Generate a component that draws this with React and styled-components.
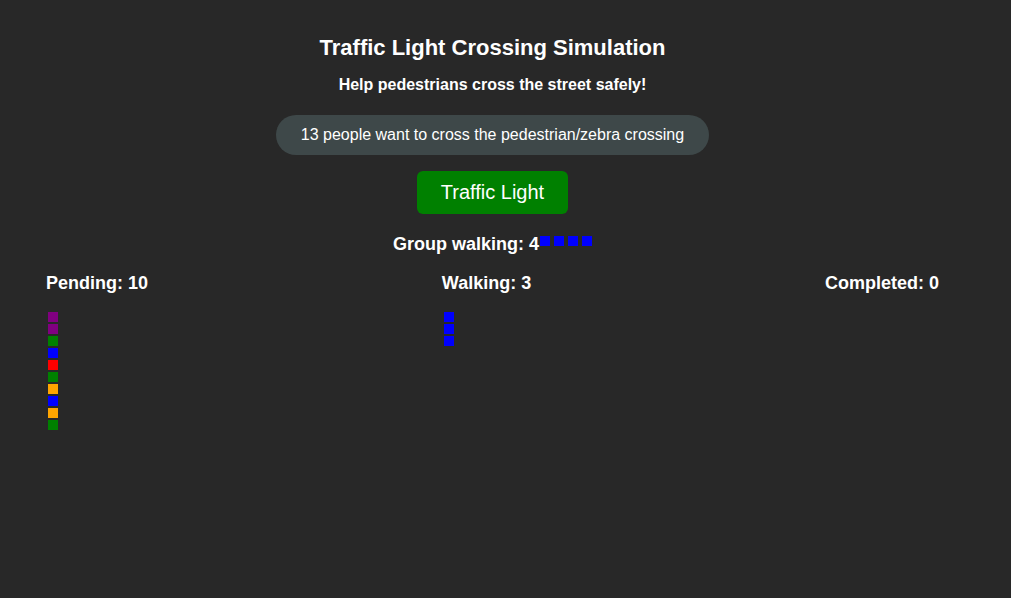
import React from "react";
import styled, { createGlobalStyle } from "styled-components";

const Global = createGlobalStyle`
  html, body { margin: 0; padding: 0; background: #282828; }
  body { font-family: "Liberation Sans", Arial, sans-serif; color: #ffffff; }
`;

const Page = styled.div`
  width: 985px;
  min-height: 598px;
  display: flex;
  flex-direction: column;
  align-items: center;
  padding-top: 35px;
  box-sizing: border-box;
`;

const Title = styled.h1`
  margin: 0;
  font-size: 22px;
  line-height: 26px;
  font-weight: bold;
`;

const Subtitle = styled.p`
  margin: 14px 0 0;
  font-size: 16px;
  line-height: 19px;
  font-weight: bold;
`;

const Pill = styled.div`
  margin-top: 21px;
  height: 40px;
  padding: 0 25px;
  border-radius: 20px;
  background: #3e4849;
  display: flex;
  align-items: center;
  font-size: 16px;
`;

const LightButton = styled.button`
  margin-top: 16px;
  height: 43px;
  padding: 0 24px;
  border: none;
  border-radius: 6px;
  background: ${(p) => p.$color};
  color: #ffffff;
  font-family: "Liberation Sans", Arial, sans-serif;
  font-size: 20px;
`;

const GroupLine = styled.div`
  margin-top: 20px;
  font-size: 18px;
  line-height: 21px;
  font-weight: bold;
  display: flex;
  align-items: flex-start;
`;

const GroupSquares = styled.span`
  display: inline-flex;
  gap: 4px;
  margin-left: 1px;
  margin-top: 2px;
`;

const Columns = styled.div`
  align-self: stretch;
  margin-top: 18px;
  padding: 0 46px;
  display: flex;
  justify-content: space-between;
`;

const Column = styled.div`
  display: flex;
  flex-direction: column;
`;

const ColumnTitle = styled.h2`
  margin: 0;
  font-size: 18px;
  line-height: 21px;
  font-weight: bold;
`;

const Queue = styled.div`
  margin-top: 18px;
  padding-left: 2px;
  display: flex;
  flex-direction: column;
  gap: 2px;
`;

const Person = styled.div`
  width: 10px;
  height: 10px;
  background: ${(p) => p.$color};
`;

const pending = ["purple", "purple", "green", "blue", "red", "green", "orange", "blue", "orange", "green"];
const walking = ["blue", "blue", "blue"];
const group = ["blue", "blue", "blue", "blue"];

export default function App() {
  return (
    <>
      <Global />
      <Page>
        <Title>Traffic Light Crossing Simulation</Title>
        <Subtitle>Help pedestrians cross the street safely!</Subtitle>
        <Pill>13 people want to cross the pedestrian/zebra crossing</Pill>
        <LightButton $color="#008000">Traffic Light</LightButton>
        <GroupLine>
          Group walking: 4
          <GroupSquares>
            {group.map((c, i) => (
              <Person key={i} $color={c} />
            ))}
          </GroupSquares>
        </GroupLine>
        <Columns>
          <Column>
            <ColumnTitle>Pending: 10</ColumnTitle>
            <Queue>
              {pending.map((c, i) => (
                <Person key={i} $color={c} />
              ))}
            </Queue>
          </Column>
          <Column>
            <ColumnTitle>Walking: 3</ColumnTitle>
            <Queue>
              {walking.map((c, i) => (
                <Person key={i} $color={c} />
              ))}
            </Queue>
          </Column>
          <Column>
            <ColumnTitle>Completed: 0</ColumnTitle>
          </Column>
        </Columns>
      </Page>
    </>
  );
}
